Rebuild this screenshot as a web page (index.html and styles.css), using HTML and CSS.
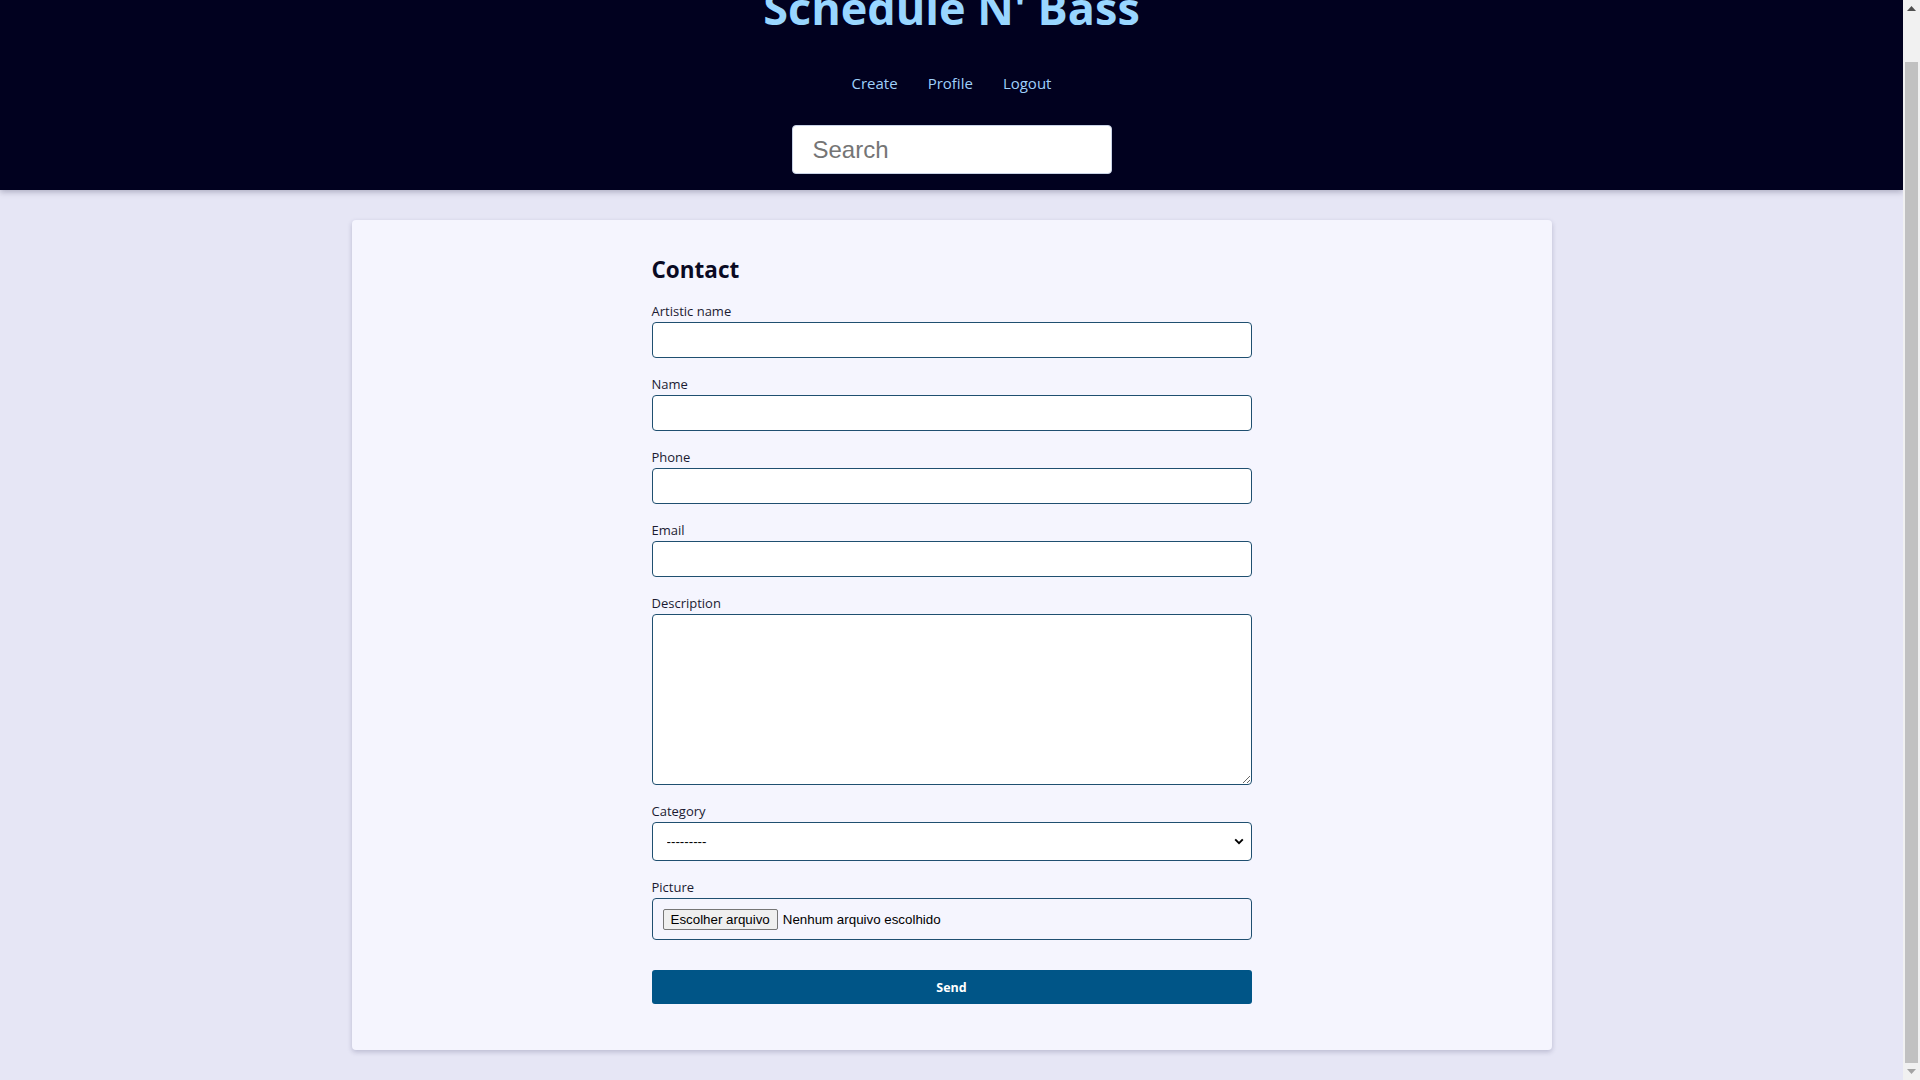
FILE: index.html
```html
<!DOCTYPE html>
<html lang="en">
<head>
<meta charset="utf-8">
<title>Schedule N' Bass</title>
<link rel="stylesheet" href="styles.css">
</head>
<body>
<div class="viewport">
  <header class="site-header">
    <h1 class="brand">Schedule N' Bass</h1>
    <nav class="nav">
      <a href="#" class="nav-link">Create</a>
      <a href="#" class="nav-link">Profile</a>
      <a href="#" class="nav-link">Logout</a>
    </nav>
    <input class="search" type="text" placeholder="Search">
  </header>
  <main class="page">
    <section class="card">
      <form class="form">
        <h2 class="form-title">Contact</h2>
        <div class="field">
          <label class="label">Artistic name</label>
          <input class="control" type="text">
        </div>
        <div class="field">
          <label class="label">Name</label>
          <input class="control" type="text">
        </div>
        <div class="field">
          <label class="label">Phone</label>
          <input class="control" type="text">
        </div>
        <div class="field">
          <label class="label">Email</label>
          <input class="control" type="text">
        </div>
        <div class="field">
          <label class="label">Description</label>
          <textarea class="control textarea"></textarea>
        </div>
        <div class="field">
          <label class="label">Category</label>
          <div class="select-wrap">
            <select class="control select"><option>---------</option></select>
            <svg class="chevron" width="10" height="7" viewBox="0 0 10 7"><path d="M1.2 1.4 L5 5.2 L8.8 1.4" fill="none" stroke="#000" stroke-width="1.9"/></svg>
          </div>
        </div>
        <div class="field">
          <label class="label">Picture</label>
          <div class="file-box">
            <button type="button" class="file-btn">Escolher arquivo</button>
            <span class="file-text">Nenhum arquivo escolhido</span>
          </div>
        </div>
        <button type="button" class="send">Send</button>
      </form>
    </section>
  </main>
</div>
<div class="scrollbar">
  <div class="sb-btn"><svg width="9" height="5" viewBox="0 0 9 5"><path d="M0 5 L4.5 0 L9 5 Z" fill="#505050"/></svg></div>
  <div class="sb-track">
    <div class="sb-thumb"></div>
  </div>
  <div class="sb-btn"><svg width="9" height="5" viewBox="0 0 9 5"><path d="M0 0 L4.5 5 L9 0 Z" fill="#a3a3a3"/></svg></div>
</div>
</body>
</html>
```
FILE: styles.css
```css
html, body {
  margin: 0;
  height: 100%;
}
body {
  display: flex;
  overflow: hidden;
  background: #e6e6f5;
  font-family: "Open Sans", "Noto Sans", sans-serif;
}
.viewport {
  flex: 1;
  height: 1080px;
  overflow: hidden;
  display: flex;
  flex-direction: column;
  justify-content: flex-end;
}
.site-header {
  flex-shrink: 0;
  background: #01011f;
  display: flex;
  flex-direction: column;
  align-items: center;
  padding: 25px 0 16px;
  box-shadow: 0 2px 6px rgba(0, 0, 40, 0.25);
  position: relative;
  z-index: 1;
}
.brand {
  margin: 0;
  font-size: 45px;
  line-height: 60px;
  font-weight: 700;
  color: #99d6ff;
}
.nav {
  display: flex;
  gap: 30px;
  margin-top: 34px;
  margin-bottom: 31px;
}
.nav-link {
  font-size: 15px;
  line-height: 22px;
  color: #9fd0fb;
  text-decoration: none;
}
.search {
  box-sizing: border-box;
  width: 320px;
  height: 49px;
  border: 1px solid #c9d3e6;
  border-radius: 4px;
  padding: 0 20px;
  font-family: "Liberation Sans", Arial, sans-serif;
  font-size: 24px;
  background: #fff;
  outline: none;
}
.search::placeholder {
  color: #757575;
}
.page {
  flex-shrink: 0;
  padding: 30px 0;
  display: flex;
  justify-content: center;
}
.card {
  width: 1200px;
  box-sizing: border-box;
  background: #f5f5fe;
  border-radius: 4px;
  box-shadow: 0 2px 5px rgba(30, 30, 80, 0.22);
  padding: 35px 0 46px;
}
.form {
  width: 600px;
  margin: 0 auto;
  display: flex;
  flex-direction: column;
}
.form-title {
  margin: 0 0 16px;
  font-size: 22.5px;
  line-height: 30px;
  font-weight: 700;
  color: #0a0a23;
}
.field {
  display: flex;
  flex-direction: column;
  margin-bottom: 16px;
}
.label {
  font-size: 13px;
  line-height: 21px;
  margin-bottom: 0;
  color: #1b1b32;
}
.control {
  box-sizing: border-box;
  width: 100%;
  height: 36px;
  border: 1px solid #1f4f70;
  border-radius: 4px;
  background: #fff;
  margin: 0;
  font-family: "Liberation Sans", Arial, sans-serif;
  font-size: 13.33px;
}
.textarea {
  height: 171px;
  resize: vertical;
}
.select-wrap {
  position: relative;
}
.select {
  height: 39px;
  appearance: none;
  -webkit-appearance: none;
  padding: 0 14px;
  color: #000;
}
.chevron {
  position: absolute;
  right: 8px;
  top: 16px;
}
.file-box {
  box-sizing: border-box;
  height: 42px;
  border: 1px solid #1f4f70;
  border-radius: 4px;
  display: flex;
  align-items: center;
  padding: 0 10px;
  font-family: "Liberation Sans", Arial, sans-serif;
  font-size: 13.33px;
}
.file-btn {
  box-sizing: border-box;
  height: 21px;
  padding: 0 7px;
  margin: 0;
  background: #efefef;
  border: 1px solid #767676;
  border-radius: 2px;
  font-family: "Liberation Sans", Arial, sans-serif;
  font-size: 13.33px;
  color: #000;
}
.file-text {
  margin-left: 5px;
  color: #000;
}
.send {
  margin-top: 14px;
  height: 34px;
  border: none;
  border-radius: 3px;
  background: #005587;
  color: #fff;
  font-family: "Open Sans", sans-serif;
  font-weight: 700;
  font-size: 12.5px;
}
.scrollbar {
  width: 17px;
  flex-shrink: 0;
  height: 1080px;
  background: #f1f1f1;
  display: flex;
  flex-direction: column;
}
.sb-btn {
  height: 17px;
  display: flex;
  align-items: center;
  justify-content: center;
}
.sb-track {
  flex: 1;
  display: flex;
  flex-direction: column;
  padding: 45px 2px 0;
}
.sb-thumb {
  flex: 1;
  background: #c1c1c1;
}
```
